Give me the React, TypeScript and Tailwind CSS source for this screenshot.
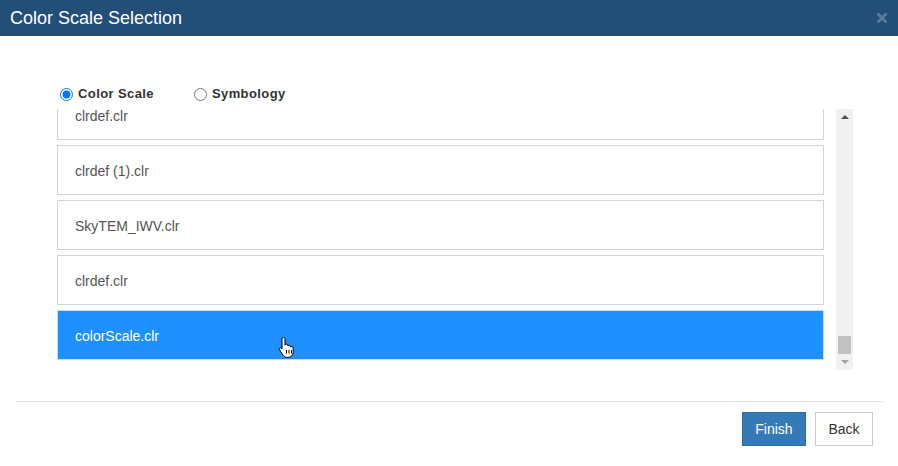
import React, { useLayoutEffect, useRef, useState } from 'react';

// --- Color scale files shown in the list ---
const files: string[] = [
  'SkyTEM_IWV.clr',
  'clrdef.clr',
  'clrdef (1).clr',
  'colorScale.clr',
  'SkyTEM_IWV.clr',
  'clrdef.clr',
  'clrdef (1).clr',
  'SkyTEM_IWV.clr',
  'clrdef.clr',
  'colorScale.clr',
  'clrdef (1).clr',
  'SkyTEM_IWV.clr',
  'clrdef.clr',
  'clrdef (1).clr',
  'SkyTEM_IWV.clr',
  'clrdef.clr',
  'clrdef (1).clr',
  'SkyTEM_IWV.clr',
  'clrdef.clr',
  'clrdef (1).clr',
  'SkyTEM_IWV.clr',
  'clrdef.clr',
  'clrdef (1).clr',
  'SkyTEM_IWV.clr',
  'clrdef.clr',
  'clrdef (1).clr',
  'SkyTEM_IWV.clr',
  'clrdef.clr',
  'clrdef (1).clr',
  'SkyTEM_IWV.clr',
  'clrdef.clr',
  'clrdef (1).clr',
  'SkyTEM_IWV.clr',
  'clrdef.clr',
  'clrdef (1).clr',
  'SkyTEM_IWV.clr',
  'clrdef.clr',
  'clrdef (1).clr',
  'SkyTEM_IWV.clr',
  'clrdef.clr',
  'colorScale.clr',
];

const HandCursor: React.FC = () => (
  <svg width="17" height="22" viewBox="0 0 17 22" className="absolute left-[278px] top-[336px] pointer-events-none">
    <path
      d="M5.5 1.5c.9 0 1.5.6 1.5 1.5v6.2c.2-.6.8-1 1.5-1 .8 0 1.4.6 1.4 1.4v.4c.2-.5.7-.8 1.3-.8.8 0 1.4.6 1.4 1.4v.6c.2-.4.6-.7 1.2-.7.8 0 1.4.6 1.4 1.4v4.2c0 3-2 5.3-5 5.3H9c-1.8 0-3-.8-4-2.2L1.6 14c-.5-.7-.3-1.6.4-2 .6-.4 1.4-.2 1.9.4L4 13V3c0-.9.6-1.5 1.5-1.5z"
      fill="#ffffff"
      stroke="#000000"
      strokeWidth="1"
      strokeLinejoin="round"
    />
    <path d="M8.5 14v3.5M11 14v3.5M13.5 14v3.5" stroke="#000000" strokeWidth="1" />
  </svg>
);

export default function App() {
  const listRef = useRef<HTMLDivElement>(null);
  const [mode, setMode] = useState<'scale' | 'symbology'>('scale');
  const [selected, setSelected] = useState(files.length - 1);

  useLayoutEffect(() => {
    if (listRef.current) listRef.current.scrollTop = listRef.current.scrollHeight;
  }, []);

  return (
    <div className="relative w-[898px] h-[466px] bg-white font-['Liberation_Sans',Arial,sans-serif] overflow-hidden">
      {/* Header */}
      <div className="h-[36px] bg-[#224e77] flex items-center justify-between pl-[10px] pr-[11px]">
        <h4 className="text-white text-[18px] leading-none">Color Scale Selection</h4>
        <button className="flex items-center justify-center mt-[-1px]">
          <svg width="10" height="10" viewBox="0 0 10 10">
            <path d="M1.2 1.2l7.6 7.6M8.8 1.2l-7.6 7.6" stroke="#5b7b9a" strokeWidth="2.8" strokeLinecap="square" />
          </svg>
        </button>
      </div>

      {/* Body */}
      <div className="pl-[57px] pr-[45px] pt-[50px]">
        <div className="flex items-center h-[16px] text-[13px] font-bold text-[#333]">
          <label className="flex items-center ml-[3px]">
            <input
              type="radio"
              name="mode"
              checked={mode === 'scale'}
              onChange={() => setMode('scale')}
              className="m-0 w-[13px] h-[13px] accent-[#0075ff]"
            />
            <span className="ml-[5px] tracking-[0.4px]">Color Scale</span>
          </label>
          <label className="flex items-center ml-[40px]">
            <input
              type="radio"
              name="mode"
              checked={mode === 'symbology'}
              onChange={() => setMode('symbology')}
              className="m-0 w-[13px] h-[13px]"
            />
            <span className="ml-[5px] tracking-[0.4px]">Symbology</span>
          </label>
        </div>

        <div className="flex mt-[7px] h-[261px]">
          <div
            ref={listRef}
            className="w-[767px] h-full overflow-y-scroll [scrollbar-width:none] pb-[5px]"
          >
            {files.map((name, i) => (
              <div
                key={i}
                onClick={() => setSelected(i)}
                className={`h-[50px] mb-[5px] border flex items-center pl-[17px] pt-[3px] text-[14px] cursor-pointer ${
                  i === selected
                    ? 'bg-[#1e90ff] border-[#c7def5] text-white'
                    : 'bg-white border-[#d4d4d4] text-[#555]'
                }`}
              >
                {name}
              </div>
            ))}
          </div>

          {/* Scrollbar */}
          <div className="ml-[12px] w-[17px] h-full bg-[#f1f1f1] flex flex-col">
            <div className="h-[15px] flex items-center justify-center">
              <div className="w-0 h-0 border-l-[4px] border-r-[4px] border-b-[4px] border-l-transparent border-r-transparent border-b-[#505050]" />
            </div>
            <div className="flex-1 flex flex-col justify-end px-[2px]">
              <div className="h-[18px] bg-[#c1c1c1]" />
            </div>
            <div className="h-[16px] flex items-center justify-center">
              <div className="w-0 h-0 border-l-[4px] border-r-[4px] border-t-[4px] border-l-transparent border-r-transparent border-t-[#a3a3a3]" />
            </div>
          </div>
        </div>
      </div>

      {/* Footer */}
      <div className="mx-[15px] mt-[31px] border-t border-[#e5e5e5] pt-[10px] pr-[10px] flex justify-end gap-[9px]">
        <button className="h-[34px] w-[64px] bg-[#337ab7] border border-[#2e6da4] text-white text-[14px]">
          Finish
        </button>
        <button className="h-[34px] w-[58px] bg-white border border-[#ccc] text-[#333] text-[14px]">
          Back
        </button>
      </div>

      <HandCursor />
    </div>
  );
}
